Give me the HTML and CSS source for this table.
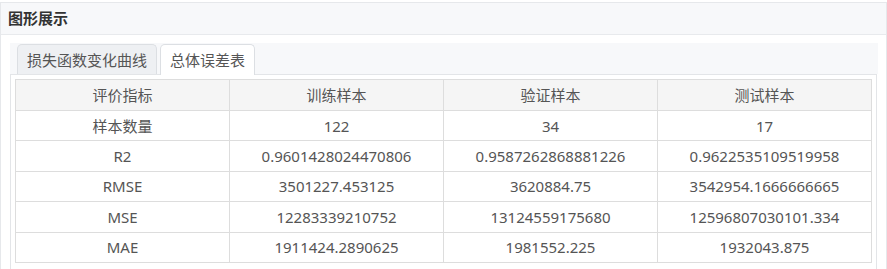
FILE: index.html
```html
<!DOCTYPE html>
<html lang="zh">
<head>
<meta charset="utf-8">
<link rel="stylesheet" href="styles.css">
</head>
<body>
<div class="panel">
  <div class="panel-head">图形展示</div>
  <div class="panel-body">
    <div class="tabs">
      <div class="tab">损失函数变化曲线</div>
      <div class="tab active">总体误差表</div>
    </div>
    <div class="tab-content">
      <table class="grid">
        <thead>
          <tr><th>评价指标</th><th>训练样本</th><th>验证样本</th><th>测试样本</th></tr>
        </thead>
        <tbody>
          <tr><td>样本数量</td><td>122</td><td>34</td><td>17</td></tr>
          <tr><td>R2</td><td>0.9601428024470806</td><td>0.9587262868881226</td><td>0.9622535109519958</td></tr>
          <tr><td>RMSE</td><td>3501227.453125</td><td>3620884.75</td><td>3542954.1666666665</td></tr>
          <tr><td>MSE</td><td>12283339210752</td><td>13124559175680</td><td>12596807030101.334</td></tr>
          <tr><td>MAE</td><td>1911424.2890625</td><td>1981552.225</td><td>1932043.875</td></tr>
        </tbody>
      </table>
    </div>
  </div>
</div>
</body>
</html>
```
FILE: styles.css
```css
html, body {
  margin: 0;
  padding: 0;
  background: #ffffff;
}
body {
  font-family: "Noto Sans", "Noto Sans CJK SC", sans-serif;
  font-size: 15px;
  color: #555;
}
.panel {
  margin-top: 2px;
  border: 1px solid #e6e8eb;
  height: 320px;
}
.panel-head {
  height: 31px;
  line-height: 31px;
  padding-left: 7px;
  background: #f7f8fa;
  border-bottom: 1px solid #e8eaed;
  font-weight: bold;
  color: #333;
}
.panel-body {
  padding: 8px 8px 0 9px;
}
.tabs {
  display: flex;
  align-items: flex-end;
  height: 31px;
  padding-left: 7px;
  background: #f7f8fa;
  gap: 3px;
}
.tab {
  height: 30px;
  line-height: 30px;
  padding: 0 9px;
  border: 1px solid #dcdfe3;
  border-bottom: none;
  border-radius: 5px 5px 0 0;
  background: #eef0f3;
  color: #555;
  box-sizing: border-box;
}
.tab.active {
  background: #ffffff;
  height: 31px;
  margin-bottom: -1px;
  position: relative;
}
.tab-content {
  border: 1px solid #e3e5e8;
  padding: 4px 4px 24px 4px;
  margin-right: 1px;
}
.grid {
  width: 100%;
  border-collapse: collapse;
  table-layout: fixed;
}
.grid th, .grid td {
  border: 1px solid #dddddd;
  text-align: center;
  font-weight: normal;
  line-height: 20px;
  padding: 4.7px 4px;
  color: #555;
}
.grid th {
  padding: 5px 4px;
  background: #f5f5f5;
}
```
